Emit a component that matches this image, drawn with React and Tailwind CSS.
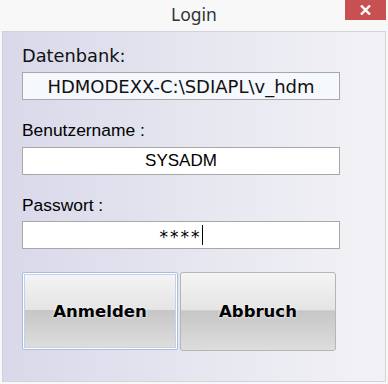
export default function App() {
  const font = { fontFamily: '"Liberation Sans", Arial, sans-serif' };
  const wide = { fontFamily: '"DejaVu Sans", Verdana, sans-serif' };
  return (
    <div className="w-[388px] h-[384px] bg-[#f8f8f8] flex flex-col relative" style={font}>
      {/* title bar */}
      <div className="h-[31px] flex items-center justify-center text-[17.5px] text-[#333] pb-[2px]" style={{ fontFamily: '"Noto Sans", sans-serif' }}>
        Login
      </div>
      <button className="absolute top-0 right-[2px] w-[41px] h-[20px] bg-[#c75050] flex items-center justify-center text-white">
        <svg width="11" height="10" viewBox="0 0 11 10">
          <path d="M1 0.5 L10 9.5 M10 0.5 L1 9.5" stroke="white" strokeWidth="2.4" />
        </svg>
      </button>

      {/* client area */}
      <div className="flex-1 ml-[2px] mr-[2px] mb-[2px] border border-[#d2d2dc] bg-gradient-to-r from-[#d8d8ea] via-[#e6e6f0] to-[#f2f2f6] pl-[19px] pt-[14px] flex flex-col">
        <div className="h-[20px] leading-[20px] text-[17.8px] text-[#111]" style={wide}>Datenbank:</div>
        <div className="mt-[6px] w-[318px] h-[28px] border border-[#a8a8a8] bg-[#f5f8fd] flex items-center justify-center text-[18px] text-[#111]" style={wide}>
          HDMODEXX-C:\SDIAPL\v_hdm
        </div>

        <div className="mt-[20px] h-[20px] leading-[20px] text-[17.4px] text-black">Benutzername :</div>
        <div className="mt-[7px] w-[318px] h-[28px] border border-[#a8a8a8] bg-white flex items-center justify-center text-[17px] text-black">
          SYSADM
        </div>

        <div className="mt-[20px] h-[20px] leading-[20px] text-[17.4px] text-black">Passwort :</div>
        <div className="mt-[6px] w-[318px] h-[28px] border border-[#a8a8a8] bg-white flex items-center justify-center text-[17px] text-black">
          <span className="pt-[5px] tracking-[2px]" style={wide}>****</span>
          <span className="inline-block w-px h-[20px] bg-black" />
        </div>

        <div className="mt-[23px] flex gap-[2px]">
          <button className="w-[156px] h-[78px] rounded-[2px] border border-[#a9bedb] p-px bg-white">
            <div
              className="w-full h-full flex items-center justify-center pt-[2px] text-[16.5px] font-bold text-black bg-[linear-gradient(to_bottom,#f4f4f4_0%,#e4e4e4_48%,#c6c6c6_49%,#dddddd_100%)] border border-[#c4d2e6]"
              style={{ ...wide, textShadow: '0 0 3px #fff' }}
            >
              Anmelden
            </div>
          </button>
          <button
            className="w-[156px] h-[79px] rounded-[3px] border border-[#b5b5b5] flex items-center justify-center pt-[2px] text-[16.5px] font-bold text-black bg-[linear-gradient(to_bottom,#f4f4f4_0%,#e4e4e4_48%,#c6c6c6_49%,#dddddd_100%)]"
            style={{ ...wide, textShadow: '0 0 3px #fff' }}
          >
            Abbruch
          </button>
        </div>
      </div>
    </div>
  );
}
